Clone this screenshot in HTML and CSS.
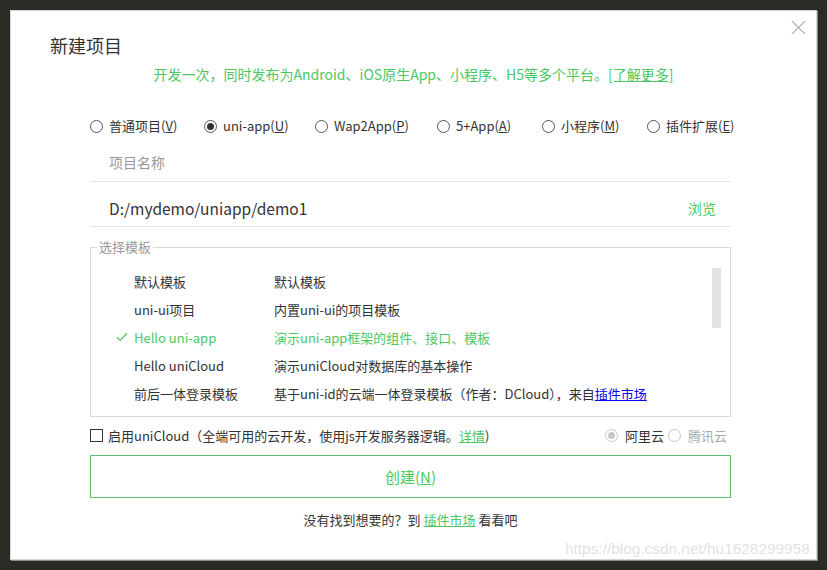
FILE: index.html
```html
<!DOCTYPE html>
<html lang="zh">
<head>
<meta charset="utf-8">
<title>新建项目</title>
<link rel="stylesheet" href="styles.css">
</head>
<body>
<div class="dialog">
  <button class="close" aria-label="关闭">
    <svg width="15" height="15" viewBox="0 0 15 15"><path d="M1 1 L14 14 M14 1 L1 14" stroke="#b4b4b4" stroke-width="1.1" fill="none"/></svg>
  </button>
  <h1 class="title">新建项目</h1>
  <p class="subtitle">开发一次，同时发布为Android、iOS原生App、小程序、H5等多个平台。<a class="more">[了解更多]</a></p>

  <div class="content">
    <div class="types">
      <label class="type"><span class="radio"></span>普通项目(<u>V</u>)</label>
      <label class="type"><span class="radio on"></span>uni-app(<u>U</u>)</label>
      <label class="type"><span class="radio"></span>Wap2App(<u>P</u>)</label>
      <label class="type"><span class="radio"></span>5+App(<u>A</u>)</label>
      <label class="type"><span class="radio"></span>小程序(<u>M</u>)</label>
      <label class="type"><span class="radio"></span>插件扩展(<u>E</u>)</label>
    </div>

    <div class="field name"><span class="placeholder">项目名称</span></div>
    <div class="field path"><span class="value">D:/mydemo/uniapp/demo1</span><span class="browse">浏览</span></div>

    <fieldset class="templates">
      <legend>选择模板</legend>
      <div class="list">
        <div class="row"><span class="check"></span><span class="c1">默认模板</span><span class="c2">默认模板</span></div>
        <div class="row"><span class="check"></span><span class="c1">uni-ui项目</span><span class="c2">内置uni-ui的项目模板</span></div>
        <div class="row sel"><span class="check"><svg width="12" height="10" viewBox="0 0 12 10"><path d="M1 5.2 L4.2 8.4 L11 1.2" stroke="#4cc764" stroke-width="1.3" fill="none"/></svg></span><span class="c1">Hello uni-app</span><span class="c2">演示uni-app框架的组件、接口、模板</span></div>
        <div class="row"><span class="check"></span><span class="c1">Hello uniCloud</span><span class="c2">演示uniCloud对数据库的基本操作</span></div>
        <div class="row"><span class="check"></span><span class="c1">前后一体登录模板</span><span class="c2">基于uni-id的云端一体登录模板（作者：DCloud），来自<a class="market">插件市场</a></span></div>
      </div>
      <div class="scrollbar"></div>
    </fieldset>

    <div class="cloud">
      <label class="enable"><span class="checkbox"></span>启用uniCloud（全端可用的云开发，使用js开发服务器逻辑。<a class="link">详情</a>)</label>
      <div class="providers">
        <label class="prov"><span class="radio dis on"></span>阿里云</label>
        <label class="prov off"><span class="radio dis"></span>腾讯云</label>
      </div>
    </div>

    <button class="create">创建(<u>N</u>)</button>

    <p class="footer">没有找到想要的？到 <a class="link">插件市场</a> 看看吧</p>
  </div>
  <div class="watermark">https://blog.csdn.net/hu1628299958</div>
</div>
</body>
</html>
```

FILE: styles.css
```css
* { box-sizing: border-box; }

html, body {
  margin: 0;
  padding: 0;
  background: #2b2b26;
  width: 827px;
  height: 570px;
  overflow: hidden;
}

body {
  padding: 10px 0 0 10px;
  font-family: "Noto Sans CJK SC", "Noto Sans", sans-serif;
  color: #333;
  font-size: 13px;
}

.dialog {
  position: relative;
  width: 807px;
  height: 550px;
  background: #fff;
  border: 1px solid #d6d6d6;
  box-shadow: 1px 1px 0 #8a8a86;
  overflow: hidden;
}

.close {
  position: absolute;
  top: 9px;
  right: 10px;
  width: 15px;
  height: 15px;
  padding: 0;
  border: 0;
  background: none;
  display: flex;
}

.title {
  margin: 0;
  padding: 21px 0 0 39px;
  font-size: 18px;
  font-weight: normal;
  line-height: 26px;
  color: #333;
}

.subtitle {
  margin: 5px 0 0;
  text-align: center;
  font-size: 14px;
  line-height: 22px;
  color: #4cc764;
}

.more { text-decoration: underline; color: #4cc764; }

.content {
  margin: 0 85px 0 79px;
}

.types {
  display: flex;
  align-items: center;
  height: 20px;
  margin-top: 31px;
  line-height: 20px;
  white-space: nowrap;
}

.type {
  display: flex;
  align-items: center;
  color: #333;
  flex: none;
}
.type:nth-child(1) { width: 114px; }
.type:nth-child(2) { width: 111px; }
.type:nth-child(3) { width: 122px; }
.type:nth-child(4) { width: 105px; }
.type:nth-child(5) { width: 105px; }

.radio {
  width: 13px;
  height: 13px;
  border: 1px solid #555;
  border-radius: 50%;
  margin-right: 6px;
  display: flex;
  align-items: center;
  justify-content: center;
  flex: none;
}
.radio.on::after {
  content: "";
  width: 7px;
  height: 7px;
  border-radius: 50%;
  background: #333;
}
.radio.dis { border-color: #c8c8c8; }
.radio.dis.on::after { background: #c8c8c8; }

.field {
  display: flex;
  align-items: center;
  justify-content: space-between;
  border-bottom: 1px solid #e3e3e3;
  padding: 0 15px 0 19px;
}

.field.name {
  height: 39px;
  margin-top: 7px;
}
.placeholder { color: #999; font-size: 14px; }

.field.path { height: 45px; padding-top: 8px; }
.value { font-size: 15.5px; color: #333; }
.browse { color: #4cc764; font-size: 14px; }

.templates {
  position: relative;
  margin: 12px 0 0;
  padding: 12px 0 0;
  border: 1px solid #dcdcdc;
  height: 178px;
  min-width: 0;
}

.templates legend {
  margin-left: 6px;
  padding: 0 2px;
  color: #999;
  font-size: 13px;
  line-height: 16px;
}

.list {
  display: flex;
  flex-direction: column;
}

.row {
  display: flex;
  align-items: center;
  height: 28px;
}
.check {
  width: 43px;
  padding-left: 25px;
  display: flex;
  align-items: center;
}
.c1 { width: 140px; }
.row.sel { color: #4cc764; }
.market { color: #0000ee; text-decoration: underline; }

.scrollbar {
  position: absolute;
  right: 9px;
  top: 13px;
  width: 9px;
  height: 60px;
  background: #e3e3e3;
}

.cloud {
  display: flex;
  align-items: center;
  justify-content: space-between;
  margin-top: 9px;
  height: 18px;
}
.enable { display: flex; align-items: center; color: #333; }
.checkbox {
  width: 13px;
  height: 13px;
  border: 1px solid #333;
  margin-right: 5px;
}
.link { color: #4cc764; text-decoration: underline; }

.providers { display: flex; align-items: center; padding-right: 4px; }
.prov { display: flex; align-items: center; color: #333; font-size: 13px; }
.prov .radio { margin-right: 7px; }
.prov.off { color: #aaa; margin-left: 4px; }

.create {
  display: block;
  width: 100%;
  height: 43px;
  margin-top: 11px;
  border: 1px solid #5cc470;
  background: #fff;
  color: #4cc764;
  font-family: inherit;
  font-size: 15px;
}
.create u { text-decoration: underline; }

.footer {
  margin: 12px 0 0;
  text-align: center;
  line-height: 20px;
  color: #333;
}

.watermark {
  position: absolute;
  left: 554px;
  bottom: 1px;
  font-family: "Liberation Sans", Arial, sans-serif;
  font-size: 15.4px;
  color: rgba(200, 200, 200, 0.55);
  white-space: nowrap;
}
```
